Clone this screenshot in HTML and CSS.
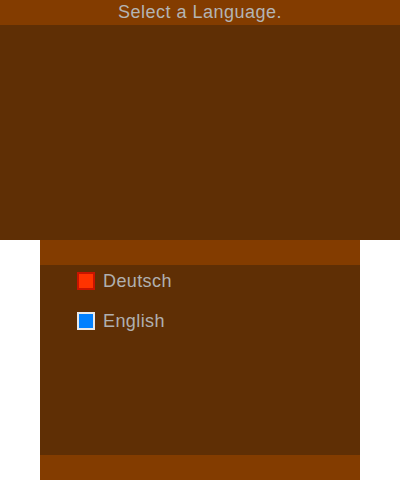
FILE: index.html
```html
<!DOCTYPE html>
<html>
<head>
<meta charset="utf-8">
<link rel="stylesheet" href="styles.css">
</head>
<body>
<div class="top">
  <div class="bar title">Select a Language.</div>
  <div class="top-body"></div>
</div>
<div class="bottom">
  <div class="bar"></div>
  <div class="list">
    <div class="item"><span class="box box-red"></span><span class="label">Deutsch</span></div>
    <div class="item"><span class="box box-blue"></span><span class="label">English</span></div>
  </div>
  <div class="bar"></div>
</div>
</body>
</html>
```
FILE: styles.css
```css
html, body {
  margin: 0;
  padding: 0;
  background: #ffffff;
}
body {
  width: 400px;
  height: 480px;
  overflow: hidden;
  font-family: "Liberation Sans", Arial, sans-serif;
}
.top {
  width: 400px;
  height: 240px;
  display: flex;
  flex-direction: column;
  background: #5f2f05;
}
.bar {
  height: 25px;
  flex: none;
  background: #833c00;
}
.title {
  color: #b4b4b4;
  font-size: 18px;
  letter-spacing: 0.5px;
  line-height: 24px;
  text-align: center;
}
.top-body {
  flex: 1;
}
.bottom {
  width: 320px;
  height: 240px;
  margin: 0 auto;
  display: flex;
  flex-direction: column;
  background: #5f2f05;
}
.list {
  flex: 1;
  padding: 7px 0 0 37px;
  display: flex;
  flex-direction: column;
  gap: 22px;
}
.item {
  display: flex;
  align-items: center;
  height: 18px;
  gap: 8px;
}
.box {
  width: 14px;
  height: 14px;
  border: 2px solid;
  flex: none;
}
.box-red {
  background: #ff3300;
  border-color: #c81400;
}
.box-blue {
  background: #0080ff;
  border-color: #e8e8e8;
}
.label {
  color: #b0b0b0;
  font-size: 18px;
  letter-spacing: 0.4px;
  line-height: 18px;
}
```
